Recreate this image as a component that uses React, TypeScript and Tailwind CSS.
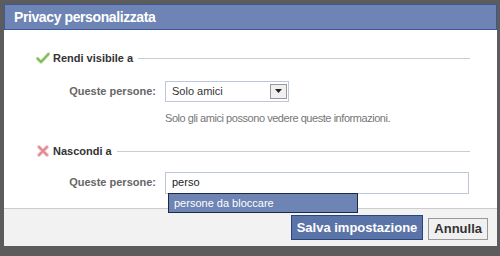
const CheckIcon = () => (
  <svg width="14" height="12" viewBox="0 0 14 12">
    <path d="M1.5 6.5 L5 10 L12.5 2" fill="none" stroke="#d6ecc4" strokeWidth="4" strokeLinecap="round" strokeLinejoin="round" />
    <path d="M1.5 6.5 L5 10 L12.5 2" fill="none" stroke="#7dbb57" strokeWidth="2" strokeLinecap="round" strokeLinejoin="round" />
  </svg>
);

const CrossIcon = () => (
  <svg width="12" height="12" viewBox="0 0 12 12">
    <path d="M2 2 L10 10 M10 2 L2 10" fill="none" stroke="#f6d2d5" strokeWidth="4" strokeLinecap="round" />
    <path d="M2 2 L10 10 M10 2 L2 10" fill="none" stroke="#de8893" strokeWidth="2" strokeLinecap="round" />
  </svg>
);

const SectionHead = ({ icon, label }: { icon: React.ReactNode; label: string }) => (
  <div className="flex items-center pl-[28px] pr-[27px]">
    <span className="w-[21px] flex justify-center">{icon}</span>
    <span className="font-bold text-[#333] text-[11px] pr-[5px]">{label}</span>
    <div className="flex-1 h-px bg-[#cccccc] mt-px" />
  </div>
);

const App = () => {
  return (
    <div
      className="w-[500px] h-[256px] bg-[#5c5c5c] pl-[4px] pr-[3px] pt-[4px] pb-[10px] flex flex-col"
      style={{ fontFamily: '"Liberation Sans", Arial, sans-serif' }}
    >
      <div className="h-[26px] bg-[#6d84b4] border border-[#3b5998] flex items-center pl-[9px]">
        <span className="text-white font-bold text-[14px] tracking-[-0.4px]">Privacy personalizzata</span>
      </div>

      <div className="flex-1 bg-white flex flex-col pt-[20px] relative">
        <SectionHead icon={<CheckIcon />} label="Rendi visibile a" />

        <div className="flex items-center mt-[14px]">
          <span className="w-[152px] text-right font-bold text-[#666] text-[11px]">Queste persone:</span>
          <div className="ml-[9px] w-[124px] h-[21px] border border-[#bdc7d8] flex items-center justify-between pl-[6px] pr-[1px] text-[11px] text-[#333]">
            <span>Solo amici</span>
            <span className="w-[17px] h-[15px] border border-[#999] bg-[#f0f0f0] flex items-center justify-center">
              <svg width="7" height="4" viewBox="0 0 7 4"><path d="M0 0 H7 L3.5 4 Z" fill="#222" /></svg>
            </span>
          </div>
        </div>

        <div className="pl-[161px] mt-[8px] text-[11px] text-[#777] tracking-[-0.45px]">
          Solo gli amici possono vedere queste informazioni.
        </div>

        <div className="mt-[17px]">
          <SectionHead icon={<CrossIcon />} label="Nascondi a" />
        </div>

        <div className="flex items-center mt-[12px]">
          <span className="w-[152px] text-right font-bold text-[#666] text-[11px]">Queste persone:</span>
          <div className="ml-[9px] w-[304px] h-[22px] border border-[#bdc7d8] flex items-center pl-[6px] text-[11px] text-[#222]">
            perso
          </div>
        </div>

        <div className="absolute left-[164px] top-[163px] w-[190px] h-[20px] bg-[#6d84b4] border border-[#1d2a47] flex items-center pl-[5px] text-[11px] text-white z-10">
          persone da bloccare
        </div>
      </div>

      <div className="h-[38px] bg-[#f2f2f2] border-t border-[#cccccc] flex items-center justify-end gap-[5px] pr-[9px]">
        <button className="h-[25px] px-[5px] bg-[#5b74a8] border border-[#29447e] text-white font-bold text-[13px]">
          Salva impostazione
        </button>
        <button className="h-[22px] mt-[3px] px-[5px] bg-[#f0f0f0] border border-[#999] text-[#333] font-bold text-[13px]">
          Annulla
        </button>
      </div>
    </div>
  );
};

export default App;
